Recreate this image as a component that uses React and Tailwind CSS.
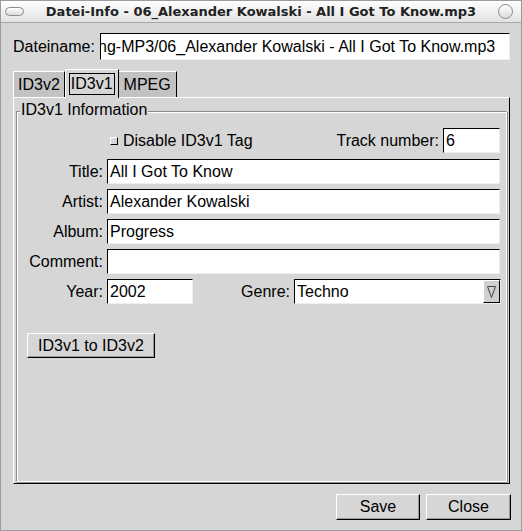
import React from "react";

const sunken =
  "bg-white border border-t-black border-l-black border-b-[#efefef] border-r-[#efefef]";
const raised =
  "bg-[#d6d6d6] border border-t-white border-l-white border-b-black border-r-black shadow-[inset_-1px_-1px_0_#9a9a9a]";

function Field({ value, className = "" }) {
  return (
    <div className={`${sunken} h-[25px] flex items-center pl-[2px] whitespace-nowrap overflow-hidden ${className}`}>
      {value}
    </div>
  );
}

function Row({ label, children }) {
  return (
    <div className="flex items-center h-[25px]">
      <span className="w-[90px] text-right pr-[4px]">{label}</span>
      {children}
    </div>
  );
}

export default function App() {
  return (
    <div className="w-[522px] h-[531px] flex flex-col bg-[#d6d6d6] border border-[#9c9c9c] font-['Liberation_Sans',Arial,sans-serif] text-[16px] text-black leading-none">
      {/* title bar */}
      <div className="h-[22px] flex items-center border-b border-[#a8a8a8] bg-gradient-to-b from-white to-[#e2e2e2] px-[4px]">
        <div className="w-[19px] h-[9px] rounded-full border border-[#8a8a8a] bg-gradient-to-b from-white to-[#dcdcdc]" />
        <div className="flex-1 text-center font-['DejaVu_Sans',sans-serif] font-bold text-[13px] text-[#222]">
          Datei-Info - 06_Alexander Kowalski - All I Got To Know.mp3
        </div>
        <div className="w-[15px] h-[15px] rounded-full border border-[#8a8a8a] bg-gradient-to-b from-white to-[#dcdcdc] mr-[4px]" />
      </div>

      <div className="flex-1 flex flex-col px-[11px] pt-[10px]">
        {/* filename */}
        <div className="flex items-center h-[27px]">
          <span className="pl-[1px] w-[88px]">Dateiname:</span>
          <div className={`${sunken} flex-1 h-[27px] flex items-center overflow-hidden whitespace-nowrap pr-[2px]`}>
            <span className="-ml-[3px]">ng-MP3/06_Alexander Kowalski - All I Got To Know.mp3</span>
          </div>
        </div>

        {/* tabs */}
        <div className="flex items-end h-[28px] mt-[9px] pl-[1px]">
          <div className="h-[26px] px-[4px] flex items-center bg-[#c2c2c2] border-t border-l border-white border-r border-r-black">
            ID3v2
          </div>
          <div className="h-[29px] -mb-[1px] px-[3px] flex items-center bg-[#d6d6d6] border-t border-l border-white border-r border-r-black relative z-10">
            <span className="border border-black h-[22px] px-[1px] flex items-center">ID3v1</span>
          </div>
          <div className="h-[26px] px-[5px] flex items-center bg-[#c2c2c2] border-t border-white border-r border-r-black">
            MPEG
          </div>
        </div>

        {/* panel */}
        <div className="h-[387px] ml-[1px] border border-t-white border-l-white border-b-black border-r-black p-[2px]">
          <div className="h-full relative pt-[11px]">
            <div className="h-[371px] border border-t-[#8c8c8c] border-l-[#8c8c8c] border-b-white border-r-white shadow-[inset_1px_1px_0_white,1px_1px_0_#8c8c8c] pt-[16px] flex flex-col">
              <span className="absolute left-[4px] top-[2px] bg-[#d6d6d6] px-[1px]">ID3v1 Information</span>

              <div className="flex items-center h-[25px]">
                <span className="w-[90px]" />
                <div className="flex items-center ml-[3px]">
                  <span className="w-[8px] h-[8px] bg-[#d6d6d6] border border-t-white border-l-white border-b-black border-r-black" />
                  <span className="ml-[5px]">Disable ID3v1 Tag</span>
                </div>
                <span className="flex-1 text-right pr-[4px]">Track number:</span>
                <Field value="6" className="w-[57px] mr-[6px]" />
              </div>

              <div className="flex flex-col gap-[5px] mt-[6px] pr-[6px]">
                <Row label="Title:"><Field value="All I Got To Know" className="flex-1" /></Row>
                <Row label="Artist:"><Field value="Alexander Kowalski" className="flex-1" /></Row>
                <Row label="Album:"><Field value="Progress" className="flex-1" /></Row>
                <Row label="Comment:"><Field value="" className="flex-1" /></Row>
                <Row label="Year:">
                  <Field value="2002" className="w-[86px]" />
                  <span className="flex-1 text-right pr-[4px]">Genre:</span>
                  <div className={`${sunken} w-[207px] h-[25px] flex items-center -mr-[1px]`}>
                    <span className="flex-1 pl-[2px]">Techno</span>
                    <div className="bg-[#cfcfcf] border border-t-white border-l-white border-b-black border-r-black w-[17px] h-[23px] flex items-center justify-center">
                      <svg width="9" height="13" viewBox="0 0 9 13">
                        <path d="M0.5 1.5 L8.5 1.5 L4.5 12.5 Z" fill="none" stroke="#444" strokeWidth="1" />
                      </svg>
                    </div>
                  </div>
                </Row>
              </div>

              <div className="mt-[29px] ml-[10px]">
                <button className={`${raised} w-[128px] h-[25px] flex items-center justify-center`}>
                  ID3v1 to ID3v2
                </button>
              </div>
            </div>
          </div>
        </div>

        {/* bottom buttons */}
        <div className="flex justify-end gap-[6px] mt-[10px] -mr-[1px]">
          <button className={`${raised} w-[84px] h-[26px] flex items-center justify-center`}>Save</button>
          <button className={`${raised} w-[85px] h-[26px] flex items-center justify-center`}>Close</button>
        </div>
      </div>
    </div>
  );
}
